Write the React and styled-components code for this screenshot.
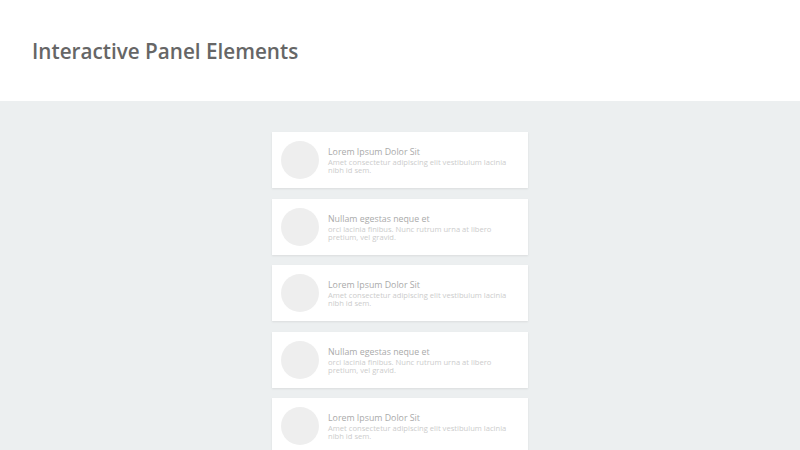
import React from "react";
import styled, { createGlobalStyle } from "styled-components";

const Global = createGlobalStyle`
  html, body { margin: 0; padding: 0; }
  body { font-family: "Open Sans", "Liberation Sans", sans-serif; background: #eceff0; }
`;

const Page = styled.div`
  width: 800px;
  height: 450px;
  overflow: hidden;
  background: #eceff0;
`;

const Header = styled.header`
  height: 101px;
  background: #ffffff;
  display: flex;
  align-items: center;
  padding: 0 32px;
  box-sizing: border-box;
`;

const Title = styled.h1`
  margin: 0;
  font-size: 20.7px;
  font-weight: 600;
  color: #666666;
`;

const List = styled.div`
  display: flex;
  flex-direction: column;
  align-items: center;
  gap: 10.5px;
  padding-top: 31px;
`;

const Card = styled.div`
  width: 256px;
  height: 56px;
  box-sizing: border-box;
  background: #ffffff;
  padding: 9px;
  display: flex;
  align-items: center;
  gap: 9px;
  box-shadow: 0 1px 2px rgba(0, 0, 0, 0.08);
`;

const Avatar = styled.div`
  width: 38px;
  height: 38px;
  border-radius: 50%;
  background: #eeeeee;
  flex-shrink: 0;
`;

const Body = styled.div`
  display: flex;
  flex-direction: column;
`;

const CardTitle = styled.div`
  font-size: 8.8px;
  font-weight: 400;
  line-height: 12px;
  color: #aaaaaa;
`;

const CardText = styled.div`
  font-size: 7.6px;
  line-height: 8px;
  color: #cccccc;
  padding-right: 8px;
`;

const items = [
  ["Lorem Ipsum Dolor Sit", "Amet consectetur adipiscing elit vestibulum lacinia nibh id sem."],
  ["Nullam egestas neque et", "orci lacinia finibus. Nunc rutrum urna at libero pretium, vel gravid."],
  ["Lorem Ipsum Dolor Sit", "Amet consectetur adipiscing elit vestibulum lacinia nibh id sem."],
  ["Nullam egestas neque et", "orci lacinia finibus. Nunc rutrum urna at libero pretium, vel gravid."],
  ["Lorem Ipsum Dolor Sit", "Amet consectetur adipiscing elit vestibulum lacinia nibh id sem."],
];

export default function App() {
  return (
    <Page>
      <Global />
      <Header>
        <Title>Interactive Panel Elements</Title>
      </Header>
      <List>
        {items.map(([t, d], i) => (
          <Card key={i}>
            <Avatar />
            <Body>
              <CardTitle>{t}</CardTitle>
              <CardText>{d}</CardText>
            </Body>
          </Card>
        ))}
      </List>
    </Page>
  );
}
